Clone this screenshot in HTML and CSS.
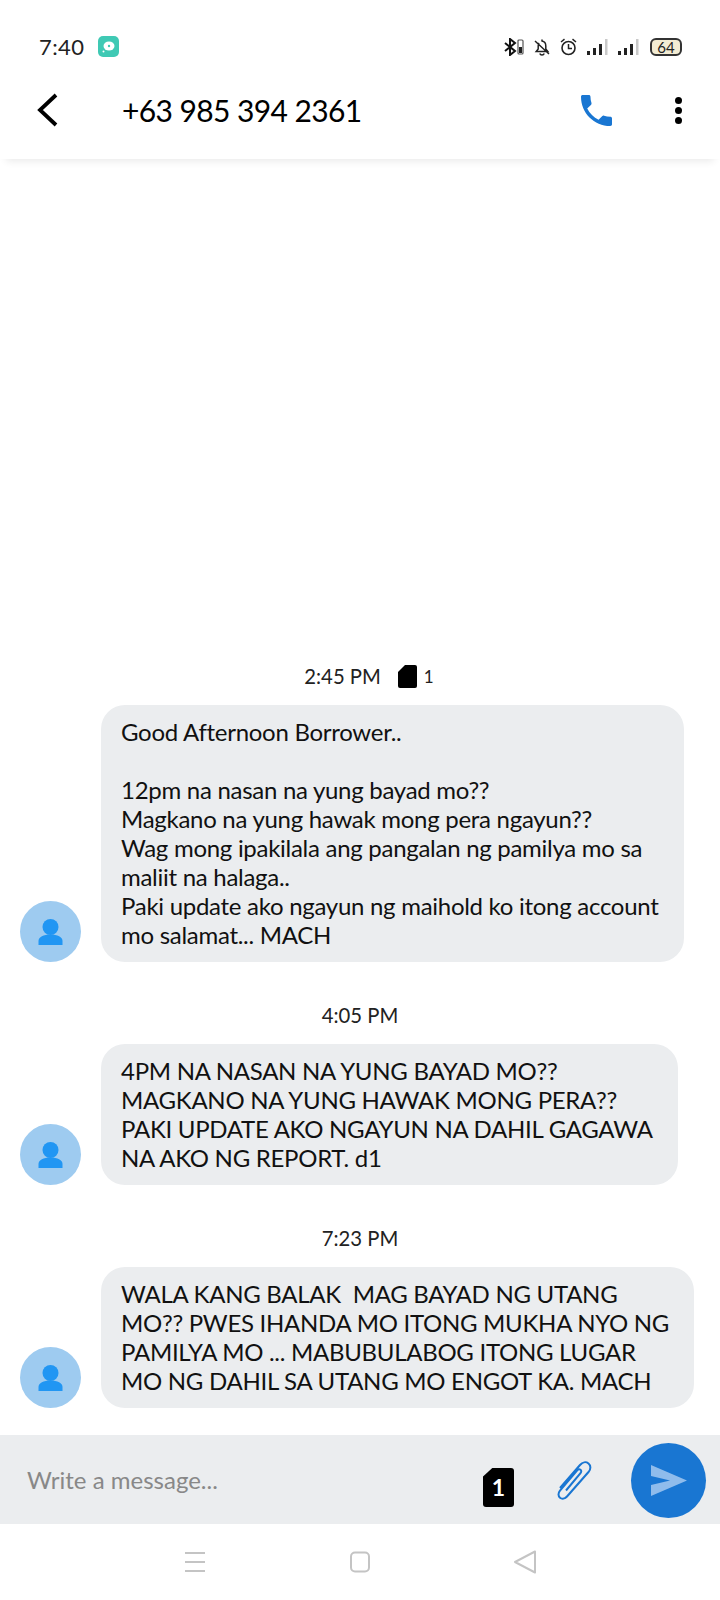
FILE: index.html
```html
<!DOCTYPE html>
<html lang="en">
<head>
<meta charset="utf-8">
<title>Messages</title>
<link rel="stylesheet" href="styles.css">
</head>
<body>
<div class="page">
  <div class="status">
    <span class="clock">7:40</span>
    <svg class="app-badge" viewBox="0 0 21 21"><rect width="21" height="21" rx="5" fill="#3fc9b4"/><ellipse cx="11" cy="10" rx="5.500" ry="4.500" fill="#fff"/><circle cx="11" cy="10" r="1.200" fill="#3fc9b4"/><circle cx="5.500" cy="15.500" r="1" fill="#fff"/></svg>
    <span class="status-right">
      <svg class="st-bt" viewBox="0 0 20 18"><path d="M1 5l10 8-5 4V1l5 4L1 13" fill="none" stroke="#111" stroke-width="2"/><rect x="14" y="2" width="5" height="14" rx="1" fill="none" stroke="#555" stroke-width="1.200"/><rect x="15" y="9" width="3" height="6" fill="#222"/></svg>
      <svg class="st-ic" viewBox="0 0 16 18"><path d="M8 1.500v1.500c2.700.5 3.800 2.500 3.800 5v3l2 2.500H2.200l2-2.500V8c0-1.200.3-2.200.8-3M5.800 15.500a2.300 2 0 0 0 4.400 0M1 3l14 13" fill="none" stroke="#222" stroke-width="1.500"/></svg>
      <svg class="st-al" viewBox="0 0 17 18"><circle cx="8.500" cy="10" r="6.500" fill="none" stroke="#222" stroke-width="1.600"/><path d="M8.500 6v4.500h3.500M1 4l3.500-2.800M16 4l-3.500-2.800" fill="none" stroke="#222" stroke-width="1.500"/></svg>
      <svg class="st-sig" viewBox="0 0 21 18"><rect x="0" y="13" width="3" height="4" fill="#222"/><rect x="6" y="10" width="3" height="7" fill="#222"/><rect x="12" y="6" width="3" height="11" fill="#222"/><rect x="18" y="1" width="2.500" height="16" fill="#c9c9c9"/></svg>
      <svg class="st-sig" viewBox="0 0 21 18"><rect x="0" y="13" width="3" height="4" fill="#222"/><rect x="6" y="10" width="3" height="7" fill="#222"/><rect x="12" y="6" width="3" height="11" fill="#222"/><rect x="18" y="1" width="2.500" height="16" fill="#c9c9c9"/></svg>
      <span class="battery">64</span>
    </span>
  </div>
  <header class="topbar">
    <svg class="back" viewBox="0 0 24 36"><path d="M20 3L4 18l16 15" fill="none" stroke="#000" stroke-width="3.800"/></svg>
    <h1 class="number">+63 985 394 2361</h1>
    <svg class="call" viewBox="3 3 18 18"><path d="M6.600 10.800c1.400 2.800 3.800 5.100 6.600 6.600l2.200-2.200c.3-.3.7-.4 1-.2 1.100.4 2.300.6 3.600.6.600 0 1 .4 1 1V20c0 .6-.4 1-1 1C10.600 21 3 13.400 3 4c0-.6.400-1 1-1h3.500c.6 0 1 .4 1 1 0 1.300.2 2.500.6 3.600.1.300 0 .7-.2 1z" fill="#1976d2"/></svg>
    <span class="kebab"><i></i><i></i><i></i></span>
  </header>
  <main class="thread">
    <div class="stamp stamp-sim"><span>2:45 PM</span><svg class="sim-small" viewBox="0 0 19 23"><path d="M7 0h10a2 2 0 0 1 2 2v19a2 2 0 0 1-2 2H2a2 2 0 0 1-2-2V7z" fill="#000"/></svg><span class="sim-num">1</span></div>
    <div class="msg">
      <svg class="avatar" viewBox="0 0 61 61"><circle cx="30.500" cy="30.500" r="30.500" fill="#9ecbf0"/><circle cx="30.500" cy="26" r="8" fill="#2196f3"/><path d="M18.500 44v-4c0-4 5-6.500 12-6.500s12 2.500 12 6.500v4z" fill="#2196f3"/></svg>
      <div class="bubble">Good Afternoon Borrower..<br><br>12pm na nasan na yung bayad mo??<br>Magkano na yung hawak mong pera ngayun??<br>Wag mong ipakilala ang pangalan ng pamilya mo sa<br>maliit na halaga..<br>Paki update ako ngayun ng maihold ko itong account<br>mo salamat... MACH</div>
    </div>
    <div class="stamp"><span>4:05 PM</span></div>
    <div class="msg">
      <svg class="avatar" viewBox="0 0 61 61"><circle cx="30.500" cy="30.500" r="30.500" fill="#9ecbf0"/><circle cx="30.500" cy="26" r="8" fill="#2196f3"/><path d="M18.500 44v-4c0-4 5-6.500 12-6.500s12 2.500 12 6.500v4z" fill="#2196f3"/></svg>
      <div class="bubble">4PM NA NASAN NA YUNG BAYAD MO??<br>MAGKANO NA YUNG HAWAK MONG PERA??<br>PAKI UPDATE AKO NGAYUN NA DAHIL GAGAWA<br>NA AKO NG REPORT. d1</div>
    </div>
    <div class="stamp"><span>7:23 PM</span></div>
    <div class="msg">
      <svg class="avatar" viewBox="0 0 61 61"><circle cx="30.500" cy="30.500" r="30.500" fill="#9ecbf0"/><circle cx="30.500" cy="26" r="8" fill="#2196f3"/><path d="M18.500 44v-4c0-4 5-6.500 12-6.500s12 2.500 12 6.500v4z" fill="#2196f3"/></svg>
      <div class="bubble">WALA KANG BALAK  MAG BAYAD NG UTANG<br>MO?? PWES IHANDA MO ITONG MUKHA NYO NG<br>PAMILYA MO ... MABUBULABOG ITONG LUGAR<br>MO NG DAHIL SA UTANG MO ENGOT KA. MACH</div>
    </div>
  </main>
  <footer class="composer">
    <span class="placeholder">Write a message...</span>
    <span class="sim-btn">1</span>
    <svg class="clip" viewBox="0 0 40 44"><path d="M7 29L27 6c2.500-3 6-3.500 8.500-1.500s2.500 5.500 0 8.500L14 37.500c-2 2.300-5 2.800-7 1.200s-2-4.500 0-7L24 11.500c1-1.200 2.500-1.500 3.500-.7s1 2.200 0 3.400L13 31.500" fill="none" stroke="#1976d2" stroke-width="2"/></svg>
    <span class="send"><svg viewBox="0 0 36 31"><path d="M0 0l36 15.500L0 31V20l19-4.500L0 11z" fill="#8fbcec"/></svg></span>
  </footer>
  <nav class="navbar">
    <svg class="nav-ic" viewBox="0 0 24 24"><path d="M2 3h20M2 12h20M2 21h20" stroke="#c4c4c4" stroke-width="2"/></svg>
    <svg class="nav-ic" viewBox="0 0 24 24"><rect x="3" y="2.500" width="18" height="19" rx="4" fill="none" stroke="#c4c4c4" stroke-width="2"/></svg>
    <svg class="nav-ic" viewBox="0 0 24 24"><path d="M22 1.500L2 12l20 10.500z" fill="none" stroke="#c4c4c4" stroke-width="2" stroke-linejoin="round"/></svg>
  </nav>
</div>
</body>
</html>
```
FILE: styles.css
```css
* { box-sizing: border-box; }
html, body { margin: 0; padding: 0; background: #fff; }
.page {
  width: 720px;
  height: 1600px;
  display: flex;
  flex-direction: column;
  font-family: Lato, "Liberation Sans", sans-serif;
  color: #111;
  overflow: hidden;
}
.status {
  height: 79px;
  flex: none;
  display: flex;
  align-items: center;
  padding: 14px 38px 0 39px;
}
.clock { font-size: 22px; color: #222; letter-spacing: .4px; }
.app-badge { width: 21px; height: 21px; margin-left: 14px; }
.status-right { margin-left: auto; display: flex; align-items: center; gap: 10px; }
.st-bt { width: 20px; height: 18px; }
.st-ic { width: 16px; height: 18px; }
.st-al { width: 17px; height: 18px; }
.st-sig { width: 21px; height: 18px; }
.battery {
  width: 32px;
  height: 18px;
  margin-left: 1px;
  border: 2px solid #333;
  border-radius: 6px;
  background: #f3ecd3;
  font-size: 15px;
  line-height: 14px;
  text-align: center;
  color: #222;
}
.topbar {
  height: 80px;
  flex: none;
  display: flex;
  align-items: center;
  padding: 0 38px 18px 36px;
  box-shadow: 0 8px 8px -6px rgba(0, 0, 0, .09);
  position: relative;
}
.back { width: 24px; height: 36px; }
.number { margin: 0 0 0 62px; font-size: 30px; font-weight: 400; color: #000; letter-spacing: -.6px; }
.call { width: 31px; height: 31px; margin-left: auto; }
.kebab { display: flex; flex-direction: column; gap: 3px; margin-left: 63px; }
.kebab i { display: block; width: 7px; height: 7px; border-radius: 50%; background: #000; }
.thread {
  flex: 1;
  display: flex;
  flex-direction: column;
  justify-content: flex-end;
  padding-bottom: 27px;
}
.stamp {
  display: flex;
  justify-content: center;
  align-items: center;
  gap: 17px;
  height: 24px;
  margin: 41px 0 17px;
  font-size: 20.300px;
  color: #222;
}
.stamp-sim { padding-left: 18px; }
.sim-small { width: 19px; height: 23px; }
.sim-num { font-size: 17px; margin-left: -10px; }
.msg { display: flex; align-items: flex-end; padding-left: 20px; gap: 20px; }
.avatar { width: 61px; height: 61px; flex: none; }
.bubble {
  padding: 12px 25px 13px 20px;
  background: #ebedef;
  border-radius: 24px;
  font-size: 24px;
  letter-spacing: -.28px;
  line-height: 29px;
  color: #111;
  white-space: pre;
}
.composer {
  height: 89px;
  flex: none;
  display: flex;
  align-items: center;
  padding: 0 14px 0 27px;
  background: #ebedef;
}
.placeholder { font-size: 24px; color: #888; }
.sim-btn {
  width: 31px;
  height: 39px;
  margin: 16px 0 0 auto;
  background: #000;
  color: #fff;
  font-size: 23px;
  font-weight: 700;
  line-height: 39px;
  text-align: center;
  border-radius: 3px;
  clip-path: polygon(30% 0, 100% 0, 100% 100%, 0 100%, 0 22%);
}
.clip { width: 40px; height: 44px; margin: 3px 0 0 39px; }
.send {
  width: 75px;
  height: 75px;
  margin: 2px 0 0 38px;
  border-radius: 50%;
  background: #1976d2;
  display: flex;
  align-items: center;
  justify-content: center;
}
.send svg { width: 36px; height: 31px; }
.navbar {
  height: 76px;
  flex: none;
  display: flex;
  justify-content: center;
  align-items: center;
  gap: 141px;
}
.nav-ic { width: 24px; height: 24px; }
```
